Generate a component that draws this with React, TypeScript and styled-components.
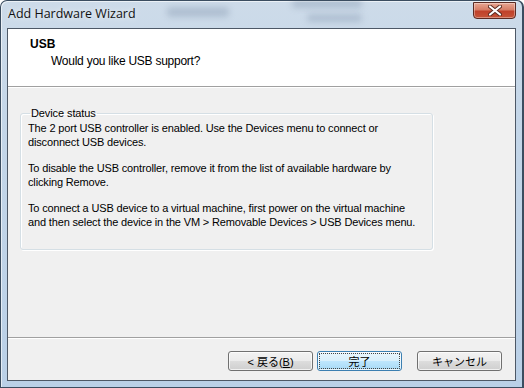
import React from "react";
import styled, { createGlobalStyle } from "styled-components";

const UI_FONT = `"Liberation Sans", "Noto Sans CJK JP", sans-serif`;

const GlobalStyle = createGlobalStyle`
  html, body {
    margin: 0;
    padding: 0;
    background: #ffffff;
  }
  body {
    width: 524px;
    height: 388px;
    overflow: hidden;
    font-family: ${UI_FONT};
  }
`;

const Window = styled.div`
  width: 524px;
  height: 388px;
  box-sizing: border-box;
  display: flex;
  flex-direction: column;
  padding: 0 6px 6px 6px;
  border: 1px solid #3b4d60;
  border-right-width: 2px;
  border-radius: 7px 7px 0 0;
  background: linear-gradient(to bottom, #cddbe9 0%, #c4d6e8 30%, #bad0e7 100%);
  box-shadow: inset 1px 1px 0 rgba(255, 255, 255, 0.6);
`;

const TitleBar = styled.div`
  position: relative;
  height: 27px;
  display: flex;
  align-items: flex-start;
  justify-content: space-between;
  overflow: hidden;
`;

const Title = styled.span`
  position: relative;
  z-index: 1;
  margin: 4px 0 0 1px;
  font-family: "Open Sans", "Noto Sans", sans-serif;
  font-size: 12.5px;
  color: #111;
  text-shadow: 0 0 6px rgba(255, 255, 255, 0.9);
`;

// blurred desktop behind the glass title bar
const Ghost = styled.span<{ $left: number; $top: number; $w: number; $h: number }>`
  position: absolute;
  left: ${(p) => p.$left}px;
  top: ${(p) => p.$top}px;
  width: ${(p) => p.$w}px;
  height: ${(p) => p.$h}px;
  background: rgba(110, 130, 155, 0.3);
  border-radius: 4px;
  filter: blur(3px);
`;

const CloseButton = styled.div`
  position: relative;
  z-index: 1;
  width: 43px;
  height: 17px;
  margin: 1px 0 0 0;
  box-sizing: border-box;
  border: 1px solid #5b2a22;
  border-radius: 0 0 4px 4px;
  background: linear-gradient(to bottom, #e8a793 0%, #d67d66 45%, #c0412a 55%, #c65438 100%);
  box-shadow: inset 0 0 0 1px rgba(255, 255, 255, 0.35);
  display: flex;
  align-items: center;
  justify-content: center;
`;

const Client = styled.div`
  flex: 1;
  display: flex;
  flex-direction: column;
  border: 1px solid #4d5866;
  background: #f0f0f0;
`;

const Header = styled.div`
  height: 58px;
  box-sizing: border-box;
  padding: 8px 0 0 22px;
  background: #ffffff;
  border-bottom: 1px solid #a0a0a0;
`;

const HeaderTitle = styled.div`
  font-size: 12px;
  font-weight: 700;
  color: #000;
  line-height: 14px;
`;

const HeaderSubtitle = styled.div`
  margin: 3px 0 0 21px;
  font-size: 12px;
  letter-spacing: -0.25px;
  color: #000;
  line-height: 14px;
`;

const Body = styled.div`
  flex: 1;
  padding: 19px 0 0 12px;
  border-top: 1px solid #ffffff;
`;

const GroupBox = styled.fieldset`
  width: 413px;
  box-sizing: border-box;
  margin: 0;
  padding: 1px 6px 20px 7px;
  border: 1px solid #d5dfe5;
  border-radius: 3px;
  box-shadow: inset 1px 1px 0 #ffffff, 1px 1px 0 #ffffff;
`;

const Legend = styled.legend`
  margin-left: 2px;
  padding: 0 1px;
  font-size: 11px;
  line-height: 13px;
  letter-spacing: -0.1px;
  color: #000;
`;

const Paragraph = styled.p`
  margin: 0 0 12px 0;
  font-size: 11px;
  line-height: 14px;
  letter-spacing: -0.15px;
  white-space: nowrap;
  color: #000;
  &:last-child {
    margin-bottom: 0;
  }
`;

const Footer = styled.div`
  height: 43px;
  box-sizing: border-box;
  display: flex;
  justify-content: flex-end;
  align-items: flex-start;
  padding: 13px 13px 0 0;
  border-top: 1px solid #a0a0a0;
  box-shadow: inset 0 1px 0 #ffffff;
`;

const Button = styled.button<{ $primary?: boolean; $gap?: number }>`
  width: 85px;
  height: 20px;
  margin-left: ${(p) => p.$gap ?? 0}px;
  padding: 0;
  box-sizing: border-box;
  font-family: ${UI_FONT};
  font-size: 11px;
  color: #000;
  border-radius: 3px;
  border: 1px solid ${(p) => (p.$primary ? "#3c7fb1" : "#707070")};
  background: ${(p) =>
    p.$primary
      ? "linear-gradient(to bottom, #eaf6fd 0%, #d9f0fc 50%, #bee6fd 51%, #a7d9f5 100%)"
      : "linear-gradient(to bottom, #f2f2f2 0%, #ebebeb 50%, #dddddd 51%, #cfcfcf 100%)"};
  box-shadow: inset 0 0 0 1px rgba(255, 255, 255, 0.7);
  outline: ${(p) => (p.$primary ? "1px dotted #444" : "none")};
  outline-offset: -3px;
`;

export default function App() {
  return (
    <>
      <GlobalStyle />
      <Window>
        <TitleBar>
          <Ghost $left={160} $top={6} $w={62} $h={10} />
          <Ghost $left={285} $top={-2} $w={70} $h={9} />
          <Ghost $left={300} $top={13} $w={55} $h={8} />
          <Title>Add Hardware Wizard</Title>
          <CloseButton>
            <svg width="14" height="11" viewBox="0 0 14 11">
              <path d="M2 1.5 L12 9.5 M12 1.5 L2 9.5" stroke="#5a2a20" strokeWidth="4" strokeLinecap="round" />
              <path d="M2 1.5 L12 9.5 M12 1.5 L2 9.5" stroke="#ffffff" strokeWidth="2.2" strokeLinecap="round" />
            </svg>
          </CloseButton>
        </TitleBar>
        <Client>
          <Header>
            <HeaderTitle>USB</HeaderTitle>
            <HeaderSubtitle>Would you like USB support?</HeaderSubtitle>
          </Header>
          <Body>
            <GroupBox>
              <Legend>Device status</Legend>
              <Paragraph>
                The 2 port USB controller is enabled. Use the Devices menu to connect or
                <br />
                disconnect USB devices.
              </Paragraph>
              <Paragraph>
                To disable the USB controller, remove it from the list of available hardware by
                <br />
                clicking Remove.
              </Paragraph>
              <Paragraph>
                To connect a USB device to a virtual machine, first power on the virtual machine
                <br />
                and then select the device in the VM &gt; Removable Devices &gt; USB Devices menu.
              </Paragraph>
            </GroupBox>
          </Body>
          <Footer>
            <Button>
              &lt; 戻る(<u>B</u>)
            </Button>
            <Button $primary $gap={4}>
              完了
            </Button>
            <Button $gap={15}>キャンセル</Button>
          </Footer>
        </Client>
      </Window>
    </>
  );
}
